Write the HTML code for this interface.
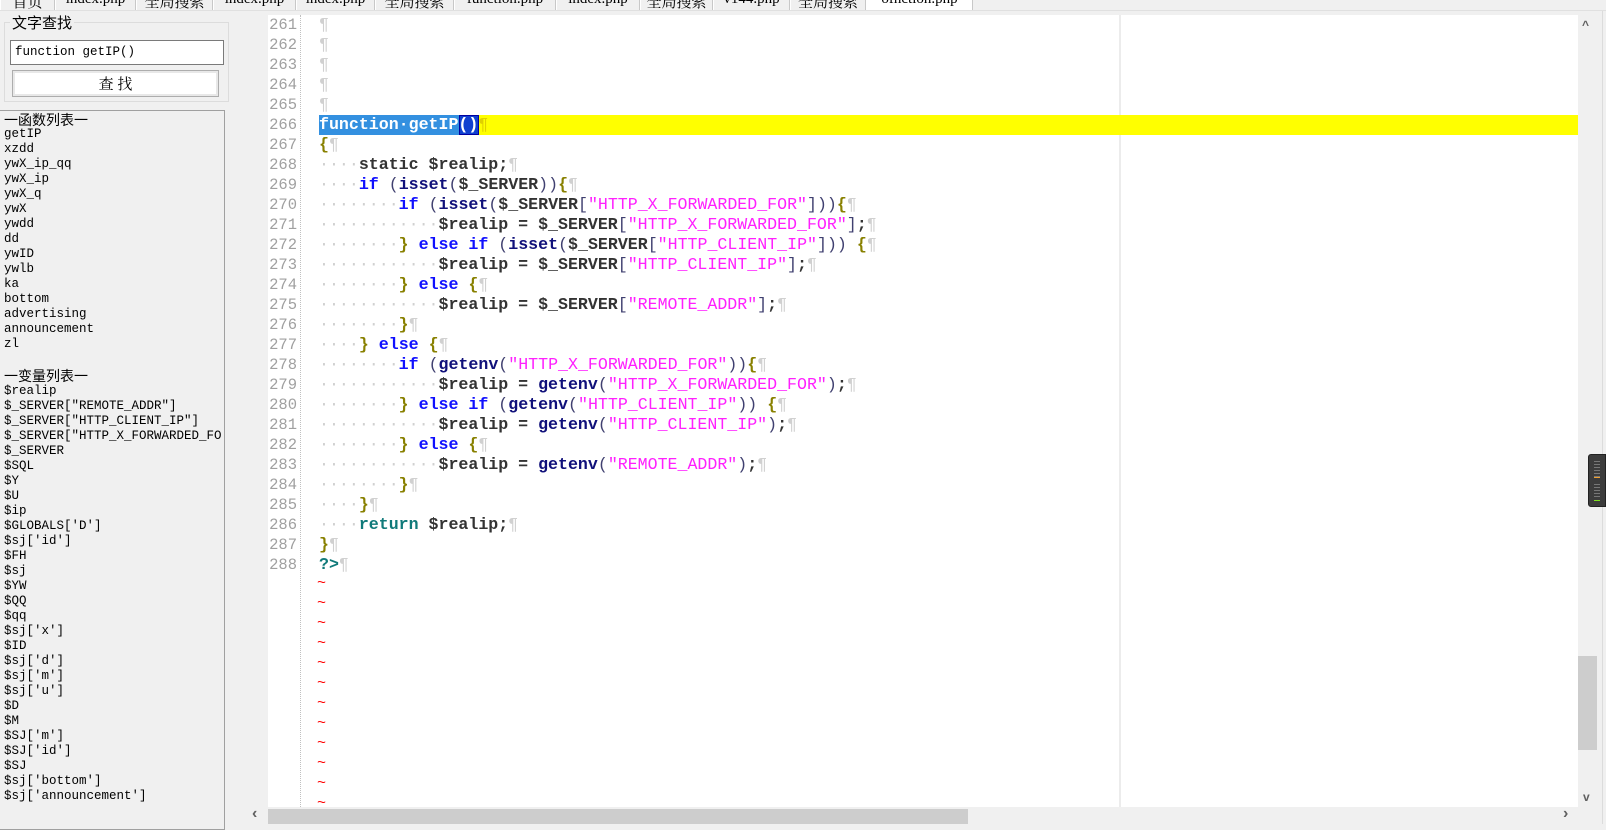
<!DOCTYPE html>
<html><head><meta charset="utf-8"><style>
*{margin:0;padding:0;box-sizing:border-box}
body{width:1606px;height:824px;background:#f0f0f0;position:relative;overflow:hidden;font-family:"Liberation Sans","Noto Sans CJK SC",sans-serif}
.tab{position:absolute;top:0;height:10px;border-right:1px solid #c8c8c8;border-left:1px solid #fff;overflow:hidden;font-family:"Liberation Serif","Noto Serif CJK SC",serif;font-size:15px;color:#000;text-align:center}
.tab span{position:relative;top:-9px}
.abs{position:absolute}
.code{position:absolute;left:319px;font-family:"Liberation Mono",monospace;font-size:16.6px;line-height:20px;height:20px;white-space:pre;color:#333;font-weight:bold}
.ln{position:absolute;left:268px;width:29px;text-align:right;font-family:"Liberation Mono",monospace;font-size:15.5px;line-height:20px;color:#a0a0a0}
.p{color:#d0d0d0;font-weight:normal}
.d{color:#d0d0d0;font-weight:normal}
.k{color:#1010ff}
.f{color:#10107a}
.s{color:#ff20ff;font-weight:normal}
.b{color:#888000}
.r{color:#107a7a}
.pa{color:#404070;font-weight:normal}
.v{color:#333}
.list{position:absolute;left:4px;font-family:"Liberation Mono","Noto Serif CJK SC",monospace;font-size:12.5px;line-height:15px;color:#000;white-space:pre}
.til{position:absolute;left:317px;color:#f00;font-family:"Liberation Mono",monospace;font-size:15px}
</style></head><body>
<!-- tabs -->
<div class="tab" style="left:0;width:55px"><span>首页</span></div>
<div class="tab" style="left:55px;width:81px"><span>index.php</span></div>
<div class="tab" style="left:136px;width:77px"><span>全局搜索</span></div>
<div class="tab" style="left:213px;width:83px"><span>index.php</span></div>
<div class="tab" style="left:296px;width:79px"><span>index.php</span></div>
<div class="tab" style="left:375px;width:79px"><span>全局搜索</span></div>
<div class="tab" style="left:454px;width:102px"><span>function.php</span></div>
<div class="tab" style="left:556px;width:84px"><span>index.php</span></div>
<div class="tab" style="left:640px;width:73px"><span>全局搜索</span></div>
<div class="tab" style="left:713px;width:77px"><span>v144.php</span></div>
<div class="tab" style="left:790px;width:76px"><span>全局搜索</span></div>
<div class="tab" style="left:866px;width:107px;background:#fff"><span>ofnction.php</span></div>
<div class="abs" style="left:0;top:10px;width:1606px;height:1px;background:#e0e0e0"></div>

<!-- search group -->
<div class="abs" style="left:4px;top:22px;width:225px;height:80px;border:1px solid #dcdcdc"></div>
<div class="abs" style="left:10px;top:12px;padding:0 2px;background:#f0f0f0;font-size:15px;font-family:'Liberation Sans','Noto Sans CJK SC',sans-serif">文字查找</div>
<div class="abs" style="left:10px;top:40px;width:214px;height:25px;background:#fff;border:1px solid #7a7a7a;font-family:'Liberation Mono',monospace;font-size:12.5px;line-height:22px;padding-left:4px">function getIP()</div>
<div class="abs" style="left:12px;top:70px;width:207px;height:27px;background:#fff;border:1px solid #adadad;box-shadow:inset 0 0 0 2px #e8e8e8;text-align:center;font-size:15px;line-height:25px;font-family:'Noto Serif CJK SC',serif">查 找</div>

<!-- list box -->
<div class="abs" style="left:0;top:110px;width:225px;height:720px;border:1px solid #a0a0a0;border-left:none;background:#f0f0f0"></div>
<div class="list" style="top:112px;font-family:'Noto Sans CJK SC',sans-serif;font-size:14px;line-height:16px">一函数列表一</div>
<div class="list" style="top:127px">getIP
xzdd
ywX_ip_qq
ywX_ip
ywX_q
ywX
ywdd
dd
ywID
ywlb
ka
bottom
advertising
announcement
zl</div>
<div class="list" style="top:368px;font-family:'Noto Sans CJK SC',sans-serif;font-size:14px;line-height:16px">一变量列表一</div>
<div class="list" style="top:384px;width:218px;overflow:hidden">$realip
$_SERVER["REMOTE_ADDR"]
$_SERVER["HTTP_CLIENT_IP"]
$_SERVER["HTTP_X_FORWARDED_FOR"]
$_SERVER
$SQL
$Y
$U
$ip
$GLOBALS['D']
$sj['id']
$FH
$sj
$YW
$QQ
$qq
$sj['x']
$ID
$sj['d']
$sj['m']
$sj['u']
$D
$M
$SJ['m']
$SJ['id']
$SJ
$sj['bottom']
$sj['announcement']</div>

<!-- editor -->
<div class="abs" style="left:268px;top:15px;width:1310px;height:792px;background:#fff"></div>
<div class="abs" style="left:300px;top:15px;width:0;height:792px;border-left:1px dotted #c0c0c0"></div>
<div class="abs" style="left:1119px;top:15px;width:2px;height:792px;background:#ececec"></div>
<div class="abs" style="left:319px;top:115px;width:1259px;height:20px;background:#ffff00"></div>
<div class="abs" style="left:319px;top:115px;width:140px;height:20px;background:#3390e0"></div>
<div class="abs" style="left:459px;top:115px;width:20px;height:20px;background:#1040d0;border:1px solid #0000a0"></div>

<div class="ln" style="top:15px">261</div><div class="ln" style="top:35px">262</div><div class="ln" style="top:55px">263</div><div class="ln" style="top:75px">264</div><div class="ln" style="top:95px">265</div><div class="ln" style="top:115px">266</div><div class="ln" style="top:135px">267</div><div class="ln" style="top:155px">268</div><div class="ln" style="top:175px">269</div><div class="ln" style="top:195px">270</div><div class="ln" style="top:215px">271</div><div class="ln" style="top:235px">272</div><div class="ln" style="top:255px">273</div><div class="ln" style="top:275px">274</div><div class="ln" style="top:295px">275</div><div class="ln" style="top:315px">276</div><div class="ln" style="top:335px">277</div><div class="ln" style="top:355px">278</div><div class="ln" style="top:375px">279</div><div class="ln" style="top:395px">280</div><div class="ln" style="top:415px">281</div><div class="ln" style="top:435px">282</div><div class="ln" style="top:455px">283</div><div class="ln" style="top:475px">284</div><div class="ln" style="top:495px">285</div><div class="ln" style="top:515px">286</div><div class="ln" style="top:535px">287</div><div class="ln" style="top:555px">288</div>

<div class="code" style="top:15px"><span class="p">¶</span></div>
<div class="code" style="top:35px"><span class="p">¶</span></div>
<div class="code" style="top:55px"><span class="p">¶</span></div>
<div class="code" style="top:75px"><span class="p">¶</span></div>
<div class="code" style="top:95px"><span class="p">¶</span></div>
<div class="code" style="top:115px;color:#fff">function·getIP()<span class="p" style="color:#e0d000">¶</span></div>
<div class="code" style="top:135px"><span class="b">{</span><span class="p">¶</span></div>
<div class="code" style="top:155px"><span class="d">····</span>static $realip;<span class="p">¶</span></div>
<div class="code" style="top:175px"><span class="d">····</span><span class="k">if</span> <span class="pa">(</span><span class="f">isset</span><span class="pa">(</span>$_SERVER<span class="pa">))</span><span class="b">{</span><span class="p">¶</span></div>
<div class="code" style="top:195px"><span class="d">········</span><span class="k">if</span> <span class="pa">(</span><span class="f">isset</span><span class="pa">(</span>$_SERVER<span class="pa">[</span><span class="s">"HTTP_X_FORWARDED_FOR"</span><span class="pa">]))</span><span class="b">{</span><span class="p">¶</span></div>
<div class="code" style="top:215px"><span class="d">············</span>$realip = $_SERVER<span class="pa">[</span><span class="s">"HTTP_X_FORWARDED_FOR"</span><span class="pa">]</span>;<span class="p">¶</span></div>
<div class="code" style="top:235px"><span class="d">········</span><span class="b">}</span> <span class="k">else if</span> <span class="pa">(</span><span class="f">isset</span><span class="pa">(</span>$_SERVER<span class="pa">[</span><span class="s">"HTTP_CLIENT_IP"</span><span class="pa">]))</span> <span class="b">{</span><span class="p">¶</span></div>
<div class="code" style="top:255px"><span class="d">············</span>$realip = $_SERVER<span class="pa">[</span><span class="s">"HTTP_CLIENT_IP"</span><span class="pa">]</span>;<span class="p">¶</span></div>
<div class="code" style="top:275px"><span class="d">········</span><span class="b">}</span> <span class="k">else</span> <span class="b">{</span><span class="p">¶</span></div>
<div class="code" style="top:295px"><span class="d">············</span>$realip = $_SERVER<span class="pa">[</span><span class="s">"REMOTE_ADDR"</span><span class="pa">]</span>;<span class="p">¶</span></div>
<div class="code" style="top:315px"><span class="d">········</span><span class="b">}</span><span class="p">¶</span></div>
<div class="code" style="top:335px"><span class="d">····</span><span class="b">}</span> <span class="k">else</span> <span class="b">{</span><span class="p">¶</span></div>
<div class="code" style="top:355px"><span class="d">········</span><span class="k">if</span> <span class="pa">(</span><span class="f">getenv</span><span class="pa">(</span><span class="s">"HTTP_X_FORWARDED_FOR"</span><span class="pa">))</span><span class="b">{</span><span class="p">¶</span></div>
<div class="code" style="top:375px"><span class="d">············</span>$realip = <span class="f">getenv</span><span class="pa">(</span><span class="s">"HTTP_X_FORWARDED_FOR"</span><span class="pa">)</span>;<span class="p">¶</span></div>
<div class="code" style="top:395px"><span class="d">········</span><span class="b">}</span> <span class="k">else if</span> <span class="pa">(</span><span class="f">getenv</span><span class="pa">(</span><span class="s">"HTTP_CLIENT_IP"</span><span class="pa">))</span> <span class="b">{</span><span class="p">¶</span></div>
<div class="code" style="top:415px"><span class="d">············</span>$realip = <span class="f">getenv</span><span class="pa">(</span><span class="s">"HTTP_CLIENT_IP"</span><span class="pa">)</span>;<span class="p">¶</span></div>
<div class="code" style="top:435px"><span class="d">········</span><span class="b">}</span> <span class="k">else</span> <span class="b">{</span><span class="p">¶</span></div>
<div class="code" style="top:455px"><span class="d">············</span>$realip = <span class="f">getenv</span><span class="pa">(</span><span class="s">"REMOTE_ADDR"</span><span class="pa">)</span>;<span class="p">¶</span></div>
<div class="code" style="top:475px"><span class="d">········</span><span class="b">}</span><span class="p">¶</span></div>
<div class="code" style="top:495px"><span class="d">····</span><span class="b">}</span><span class="p">¶</span></div>
<div class="code" style="top:515px"><span class="d">····</span><span class="r">return</span> $realip;<span class="p">¶</span></div>
<div class="code" style="top:535px"><span class="b">}</span><span class="p">¶</span></div>
<div class="code" style="top:555px"><span class="r">?&gt;</span><span class="p">¶</span></div>

<div class="til" style="top:575px">~</div><div class="til" style="top:595px">~</div><div class="til" style="top:615px">~</div><div class="til" style="top:635px">~</div><div class="til" style="top:655px">~</div><div class="til" style="top:675px">~</div><div class="til" style="top:695px">~</div><div class="til" style="top:715px">~</div><div class="til" style="top:735px">~</div><div class="til" style="top:755px">~</div><div class="til" style="top:775px">~</div><div class="til" style="top:795px">~</div>

<!-- scrollbars -->
<div class="abs" style="left:247px;top:807px;width:1331px;height:17px;background:#f0f0f0"></div>
<div class="abs" style="left:252px;top:805px;font-size:16px;color:#606060;font-weight:bold">‹</div>
<div class="abs" style="left:268px;top:809px;width:700px;height:15px;background:#cdcdcd"></div>
<div class="abs" style="left:1563px;top:805px;font-size:16px;color:#606060;font-weight:bold">›</div>
<div class="abs" style="left:1578px;top:11px;width:24px;height:813px;background:#f0f0f0"></div>
<div class="abs" style="left:1602px;top:11px;width:1px;height:813px;background:#dcdcdc"></div>
<div class="abs" style="left:1582px;top:18px;font-size:12px;color:#606060;font-weight:bold">^</div>
<div class="abs" style="left:1578px;top:656px;width:19px;height:94px;background:#cdcdcd"></div>
<div class="abs" style="left:1583px;top:790px;font-size:12px;color:#606060;font-weight:bold">v</div>
<div class="abs" style="left:1588px;top:454px;width:18px;height:53px;background:#3c3c3c;border-radius:3px 0 0 3px;border:1px solid #222"></div>
<div class="abs" style="left:1594px;top:461px;width:6px;height:16px;background:repeating-linear-gradient(#777 0 1px,transparent 1px 3px)"></div>
<div class="abs" style="left:1594px;top:477px;width:6px;height:1px;background:#f0a030"></div>
<div class="abs" style="left:1594px;top:484px;width:6px;height:15px;background:repeating-linear-gradient(#777 0 1px,transparent 1px 3px)"></div>
<div class="abs" style="left:1594px;top:500px;width:6px;height:1px;background:#80e020"></div>
</body></html>
